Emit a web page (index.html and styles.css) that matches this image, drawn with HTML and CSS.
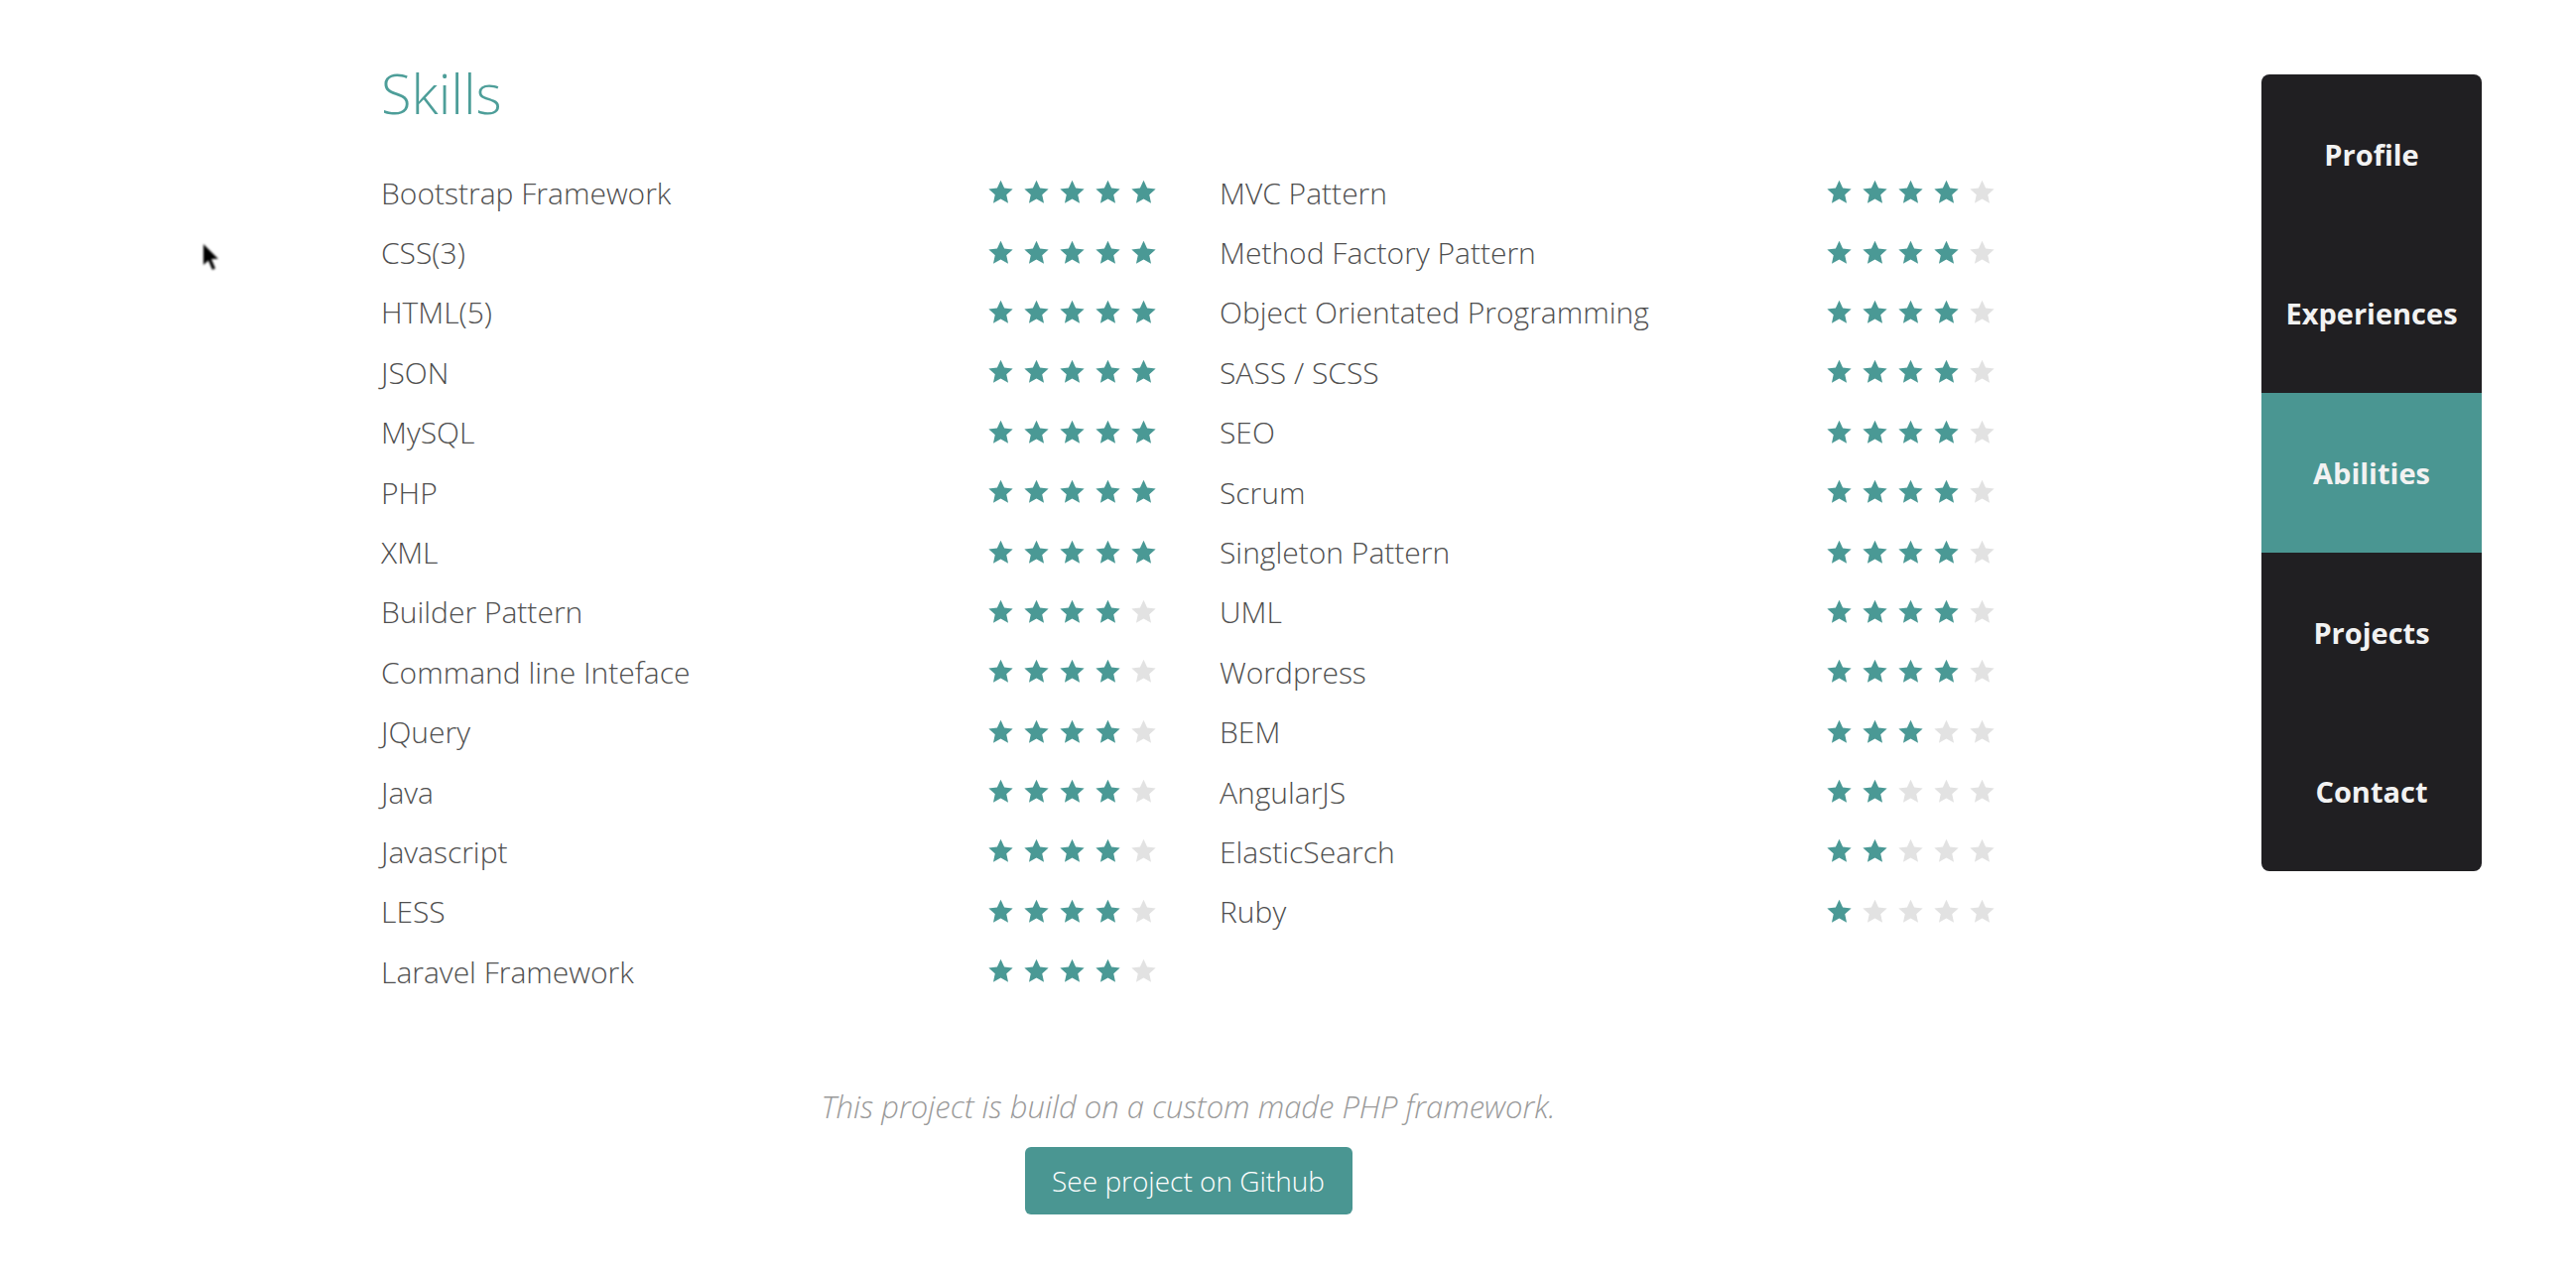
FILE: index.html
```html
<!DOCTYPE html>
<html lang="en">
<head>
<meta charset="utf-8">
<title>Abilities</title>
<link rel="stylesheet" href="styles.css">
</head>
<body>
<svg class="defs" width="0" height="0" aria-hidden="true">
  <symbol id="star" viewBox="0 0 24 23">
    <polygon points="12,0.6 15.2,7.6 22.8,8.4 17.1,13.5 18.7,21 12,17.2 5.3,21 6.9,13.5 1.2,8.4 8.8,7.6"/>
  </symbol>
</svg>
<div class="page">
  <main class="content">
    <h1 class="title">Skills</h1>
    <div class="columns">
      <ul class="skills" id="left"></ul>
      <ul class="skills" id="right"></ul>
    </div>
    <footer class="project">
      <p class="note">This project is build on a custom made PHP framework.</p>
      <a class="btn" href="#">See project on Github</a>
    </footer>
  </main>
  <nav class="sidenav">
    <a class="nav-item" href="#">Profile</a>
    <a class="nav-item" href="#">Experiences</a>
    <a class="nav-item active" href="#">Abilities</a>
    <a class="nav-item" href="#">Projects</a>
    <a class="nav-item" href="#">Contact</a>
  </nav>
</div>
<svg class="cursor" viewBox="0 0 20 30" aria-hidden="true">
  <polygon points="1,1 1,22 6,17.5 10,27 13,25.5 9,16 16,16"/>
</svg>
<script src="app.js"></script>
</body>
</html>
```
FILE: app.js
```js
var left = [
  ["Bootstrap Framework", 5], ["CSS(3)", 5], ["HTML(5)", 5], ["JSON", 5],
  ["MySQL", 5], ["PHP", 5], ["XML", 5], ["Builder Pattern", 4],
  ["Command line Inteface", 4], ["JQuery", 4], ["Java", 4], ["Javascript", 4],
  ["LESS", 4], ["Laravel Framework", 4]
];
var right = [
  ["MVC Pattern", 4], ["Method Factory Pattern", 4], ["Object Orientated Programming", 4],
  ["SASS / SCSS", 4], ["SEO", 4], ["Scrum", 4], ["Singleton Pattern", 4], ["UML", 4],
  ["Wordpress", 4], ["BEM", 3], ["AngularJS", 2], ["ElasticSearch", 2], ["Ruby", 1]
];
function fill(id, data) {
  var ul = document.getElementById(id);
  data.forEach(function (d) {
    var li = document.createElement("li");
    li.className = "skill";
    var stars = "";
    for (var i = 0; i < 5; i++) {
      stars += '<svg class="star ' + (i < d[1] ? "on" : "off") + '"><use href="#star"/></svg>';
    }
    li.innerHTML = '<span class="name">' + d[0] + '</span><span class="rating">' + stars + '</span>';
    ul.appendChild(li);
  });
}
fill("left", left);
fill("right", right);
```
FILE: styles.css
```css
html, body {
  margin: 0;
  padding: 0;
  background: #ffffff;
}
body {
  font-family: "Open Sans", "Noto Sans", sans-serif;
  color: #555555;
}
.defs {
  position: absolute;
  width: 0;
  height: 0;
}
.page {
  display: flex;
  align-items: flex-start;
  padding-left: 384px;
  gap: 268px;
}
.content {
  width: 1627px;
  display: flex;
  flex-direction: column;
}
.title {
  margin: 62px 0 0 0;
  font-size: 56px;
  line-height: 62px;
  font-weight: 300;
  color: #4d9e99;
}
.columns {
  display: grid;
  grid-template-columns: 783px 783px;
  column-gap: 62px;
  margin-top: 40px;
}
.skills {
  list-style: none;
  margin: 0;
  padding: 0;
}
.skill {
  display: flex;
  align-items: center;
  justify-content: space-between;
  height: 60.4px;
}
.name {
  font-size: 30px;
  font-weight: 300;
  color: #4f4f4f;
}
.rating {
  display: flex;
  gap: 9px;
  margin-right: 1px;
}
.star {
  width: 27px;
  height: 26px;
  display: block;
}
.star.on { fill: #4a9995; }
.star.off { fill: #e2e2e2; }
.project {
  display: flex;
  flex-direction: column;
  align-items: center;
  margin-top: 86px;
}
.note {
  margin: 0;
  font-size: 31px;
  line-height: 40px;
  font-style: italic;
  font-weight: 300;
  color: #9a9a9a;
}
.btn {
  margin-top: 21px;
  width: 330px;
  height: 68px;
  line-height: 68px;
  text-align: center;
  background: #4a9692;
  color: #ffffff;
  font-size: 28px;
  font-weight: 300;
  text-decoration: none;
  border-radius: 6px;
}
.sidenav {
  margin-top: 75px;
  width: 222px;
  display: flex;
  flex-direction: column;
  background: #201f22;
  border-radius: 8px;
  overflow: hidden;
}
.nav-item {
  height: 160.6px;
  display: flex;
  align-items: center;
  justify-content: center;
  color: #f2f2f2;
  font-size: 29px;
  font-weight: 700;
  text-decoration: none;
}
.nav-item.active {
  background: #4a9692;
}
.cursor {
  position: absolute;
  left: 204px;
  top: 245px;
  width: 20px;
  height: 30px;
  fill: #000000;
  filter: blur(0.8px);
}
```
